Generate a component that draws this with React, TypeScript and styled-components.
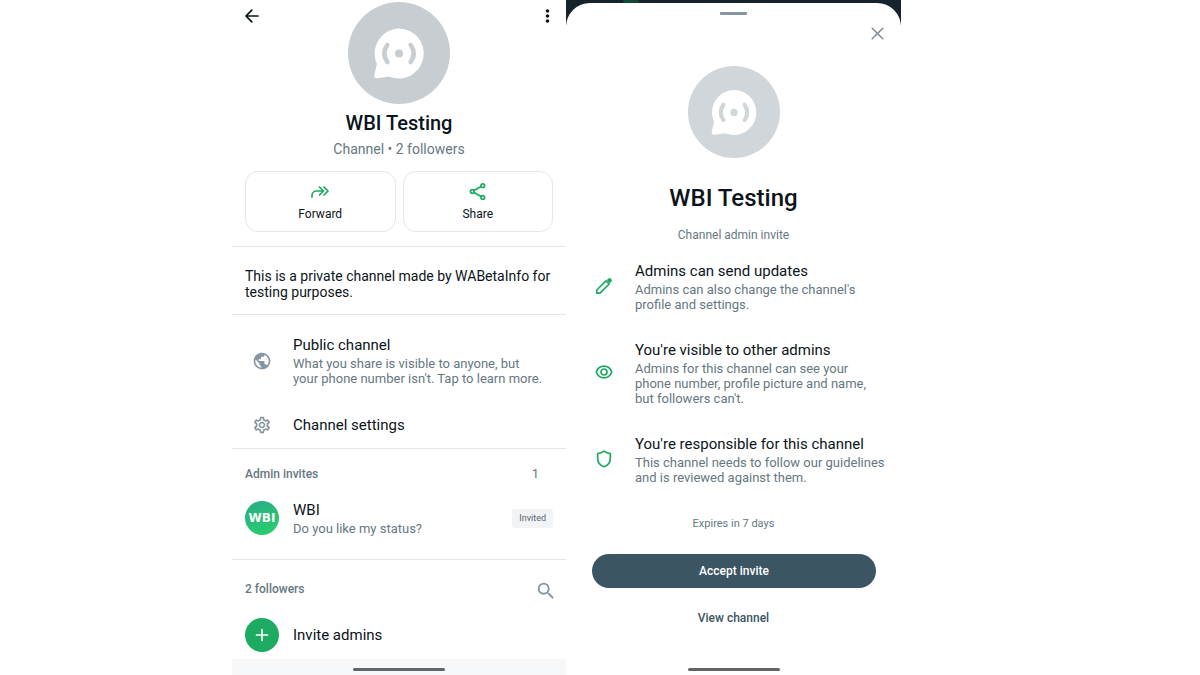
import React from "react";
import styled, { createGlobalStyle } from "styled-components";
import { MdPublic, MdOutlineSettings, MdSearch } from "react-icons/md";

const color = {
  text: "#0b141a",
  muted: "#667781",
  icon: "#8696a0",
  green: "#1daa61",
  line: "#e4e6e8",
  teal: "#3b5563",
};

const GlobalStyle = createGlobalStyle`
  * { box-sizing: border-box; }
  body {
    margin: 0;
    background: #fff;
    color: ${color.text};
    font-family: Roboto, "Liberation Sans", sans-serif;
  }
  h1, h2, h3, p, ul { margin: 0; padding: 0; font-weight: 400; }
  ul { list-style: none; }
  svg { display: block; }
`;

const Stage = styled.main`
  display: grid;
  grid-template-columns: 232fr 334fr 335fr 299fr;
  min-height: 100vh;
`;

const Phone = styled.section`
  grid-column: 2;
  display: flex;
  flex-direction: column;
`;

const Button = styled.button`
  border: 0;
  padding: 0;
  background: none;
  color: inherit;
  font: inherit;
  cursor: pointer;
`;

const Header = styled.header`
  display: grid;
  grid-template-columns: 16px 1fr 16px;
  align-items: start;
  justify-items: center;
  padding: 2px 12px 0;
`;

const IconButton = styled(Button)`
  display: grid;
  place-items: center;
  width: 16px;
  height: 28px;
  color: ${color.text};
`;

const SearchButton = styled(Button)`
  align-self: flex-end;
  margin: 0 -4px -3px 0;
  color: ${color.icon};
`;

const Avatar = styled.div<{ $size: number; $tone: string }>`
  width: ${(p) => p.$size}px;
  height: ${(p) => p.$size}px;
  border-radius: 50%;
  background: ${(p) => p.$tone};
  color: ${(p) => p.$tone};
`;

const Title = styled.h1<{ $large?: boolean }>`
  font-size: ${(p) => (p.$large ? 24 : 20)}px;
  line-height: ${(p) => (p.$large ? 28 : 24)}px;
  font-weight: 500;
  text-align: center;
`;

const ChannelInfo = styled.div`
  padding: 7px 13px 14px;
  border-bottom: 1px solid ${color.line};
`;

const Followers = styled.p`
  margin-top: 6px;
  color: ${color.muted};
  font-size: 14px;
  line-height: 16px;
  text-align: center;
`;

const Actions = styled.div`
  display: grid;
  grid-template-columns: 1fr 1fr;
  gap: 7px;
  margin-top: 14px;
`;

const Action = styled(Button)`
  display: flex;
  flex-direction: column;
  align-items: center;
  gap: 6px;
  height: 61px;
  padding-top: 10px;
  border: 1px solid ${color.line};
  border-radius: 13px;
  font-size: 12px;
  line-height: 16px;
`;

const Description = styled.p`
  padding: 21px 13px 14px;
  border-bottom: 1px solid ${color.line};
  font-size: 14px;
  line-height: 16px;
`;

const Group = styled.div<{ $top: number; $bottom: number; $last?: boolean }>`
  padding: ${(p) => p.$top}px 13px ${(p) => p.$bottom}px;
  border-bottom: ${(p) => (p.$last ? 0 : 1)}px solid ${color.line};
`;

const Row = styled(Button)`
  display: flex;
  align-items: center;
  gap: 14px;
  width: 100%;
  text-align: left;

  & + & { margin-top: 29px; }
`;

const RowIcon = styled.span`
  display: grid;
  place-items: center;
  flex: 0 0 34px;
  color: ${color.icon};
`;

const RowText = styled.span`
  display: flex;
  flex-direction: column;
  flex: 1;
  gap: 1px;
`;

const ItemTitle = styled.span`
  font-size: 15px;
  line-height: 20px;
`;

const ItemBody = styled.span`
  color: ${color.muted};
  font-size: 13px;
  line-height: 15px;
`;

const GroupHead = styled.div<{ $right: number; $gap: number }>`
  display: flex;
  align-items: center;
  justify-content: space-between;
  height: 20px;
  padding-right: ${(p) => p.$right}px;
  margin-bottom: ${(p) => p.$gap}px;
  color: ${color.muted};
  font-size: 13px;
  line-height: 16px;
`;

const GroupTitle = styled.h2`
  font-size: 12px;
  font-weight: 500;
`;

const RoundBadge = styled.span<{ $gradient?: boolean }>`
  display: grid;
  place-items: center;
  flex: 0 0 34px;
  height: 34px;
  border-radius: 50%;
  background: ${(p) =>
    p.$gradient ? "linear-gradient(160deg, #27ab86, #2bd06c)" : color.green};
  color: #fff;
  font-family: "DejaVu Sans", sans-serif;
  font-size: 12px;
  font-weight: 700;
`;

const Tag = styled.span`
  padding: 0 7px;
  border-radius: 3px;
  background: #f2f3f5;
  color: #54656f;
  font-size: 9px;
  line-height: 19px;
`;

const NavBar = styled.div<{ $tone: string }>`
  display: flex;
  justify-content: center;
  height: 16px;
  margin-top: auto;
  padding-top: 9px;
  background: ${(p) => p.$tone};

  &::after {
    content: "";
    width: 92px;
    height: 3px;
    border-radius: 2px;
    background: #636466;
  }
`;

const Backdrop = styled.section`
  grid-column: 3;
  display: flex;
  flex-direction: column;
  padding-top: 3px;
  background:
    radial-gradient(circle at 65px 0, #0d4a38 0 7px, transparent 9px),
    linear-gradient(#15232c, #15232c) top / 100% 25px no-repeat;
`;

const Sheet = styled.div`
  display: flex;
  flex-direction: column;
  flex: 1;
  border-radius: 24px 24px 0 0;
  background: #fff;
`;

const Grabber = styled.div`
  width: 27px;
  height: 3px;
  margin: 9px auto 0;
  border-radius: 1px;
  background: #8696a0;
`;

const CloseButton = styled(Button)`
  align-self: flex-end;
  margin: 11px 16px 0 0;
  padding: 1px;
  color: #7b8a94;
`;

const Hero = styled.div`
  display: flex;
  flex-direction: column;
  align-items: center;
  gap: 26px;
  padding: 25px 0 15px;
`;

const Caption = styled.p<{ $small?: boolean }>`
  color: ${color.muted};
  font-size: ${(p) => (p.$small ? 11 : 12)}px;
  line-height: 16px;
  text-align: center;
`;

const Points = styled.ul`
  display: flex;
  flex-direction: column;
  gap: 28px;
  padding: 18px 8px 31px 26px;
`;

const Point = styled.li`
  display: flex;
  align-items: center;
  gap: 19px;
`;

const PointIcon = styled.span`
  display: grid;
  place-items: center;
  flex: 0 0 24px;
  padding-bottom: 2px;
  color: ${color.green};
`;

const AcceptButton = styled(Button)`
  height: 34px;
  margin: 22px 25px 0 26px;
  border-radius: 17px;
  background: ${color.teal};
  color: #fff;
  font-size: 12px;
  font-weight: 500;
`;

const ViewLink = styled.a`
  align-self: center;
  margin-top: 22px;
  color: ${color.teal};
  font-size: 12px;
  line-height: 16px;
  font-weight: 500;
  text-decoration: none;
`;

const stroke = {
  fill: "none",
  stroke: "currentColor",
  strokeLinecap: "round" as const,
  strokeLinejoin: "round" as const,
};

const ChannelGlyph = () => (
  <svg viewBox="0 0 102 102" width="100%" height="100%" aria-hidden="true">
    <path
      fill="#fff"
      d="M51 26.500a25 25 0 1 1-10 48L29.500 76.300c-2 .4-3.600-1-3.200-3l2.600-11.500A25 25 0 0 1 51 26.500z"
    />
    <circle cx="51" cy="51.500" r="4" fill="currentColor" />
    <g {...stroke} strokeWidth="4.600">
      <path d="M39.300 43q-6 8.500 0 17" />
      <path d="M62.700 43q6 8.500 0 17" />
    </g>
  </svg>
);

const BackIcon = () => (
  <svg width="16" height="16" viewBox="0 0 16 16" {...stroke} strokeWidth="1.700">
    <path d="M14 8H2.200M7.800 2.200L2 8l5.800 5.800" />
  </svg>
);

const MoreIcon = () => (
  <svg width="16" height="16" viewBox="0 0 16 16" fill="currentColor">
    <circle cx="9.500" cy="3" r="1.800" />
    <circle cx="9.500" cy="8" r="1.800" />
    <circle cx="9.500" cy="13" r="1.800" />
  </svg>
);

const ForwardIcon = () => (
  <svg width="18" height="18" viewBox="0 0 18 18" {...stroke} strokeWidth="1.700" color={color.green}>
    <path d="M1 15v-1.500C1 10.800 3 9 5.500 9H12M8.500 5l4 4-4 4M13 5l4 4-4 4" />
  </svg>
);

const ShareIcon = () => (
  <svg width="18" height="18" viewBox="0 0 18 18" {...stroke} strokeWidth="1.700" color={color.green}>
    <circle cx="3.300" cy="9.500" r="1.800" />
    <circle cx="13.800" cy="3.700" r="1.800" />
    <circle cx="13.800" cy="15.500" r="1.800" />
    <path d="M5 8.600l7.100-4M5 10.400l7.100 4.200" />
  </svg>
);

const PlusIcon = () => (
  <svg width="14" height="14" viewBox="0 0 14 14" {...stroke} strokeWidth="1.700">
    <path d="M7 1.500v11M1.500 7h11" />
  </svg>
);

const CloseIcon = () => (
  <svg width="13" height="13" viewBox="0 0 13 13" {...stroke} strokeWidth="1.500">
    <path d="M1.200 1.200l10.600 10.600M11.800 1.200L1.200 11.800" />
  </svg>
);

const PencilIcon = () => (
  <svg width="18" height="18" viewBox="0 0 18 18" {...stroke} strokeWidth="1.700">
    <path d="M1.800 16.200v-3.200l9.200-9.200 3.200 3.200-9.200 9.200z" />
    <path d="M12.900 3.200l1-1q.6-.5 1.200 0l.7.700q.5.600 0 1.200l-1 1z" fill="currentColor" />
  </svg>
);

const EyeIcon = () => (
  <svg width="18" height="18" viewBox="0 0 18 18" {...stroke} strokeWidth="1.700">
    <path d="M1.200 9C2.600 5.400 5.600 3.200 9 3.200s6.400 2.200 7.800 5.800c-1.400 3.600-4.400 5.800-7.800 5.800S2.600 12.600 1.200 9z" />
    <circle cx="9" cy="9" r="3" />
  </svg>
);

const ShieldIcon = () => (
  <svg width="18" height="18" viewBox="0 0 18 18" {...stroke} strokeWidth="1.700">
    <path d="M9 1.200C7.300 2.600 5 3.400 2.700 3.600v4.600C2.700 12.500 5 15.500 9 16.800c4-1.300 6.300-4.300 6.300-8.600V3.600C13 3.400 10.700 2.600 9 1.200z" />
  </svg>
);

const points = [
  {
    icon: <PencilIcon />,
    title: "Admins can send updates",
    lines: ["Admins can also change the channel's", "profile and settings."],
  },
  {
    icon: <EyeIcon />,
    title: "You're visible to other admins",
    lines: [
      "Admins for this channel can see your",
      "phone number, profile picture and name,",
      "but followers can't.",
    ],
  },
  {
    icon: <ShieldIcon />,
    title: "You're responsible for this channel",
    lines: ["This channel needs to follow our guidelines", "and is reviewed against them."],
  },
];

const Lines = ({ lines }: { lines: string[] }) => (
  <>
    {lines.map((line, i) => (
      <React.Fragment key={line}>
        {i > 0 && <br />}
        {line}
      </React.Fragment>
    ))}
  </>
);

export default function App() {
  return (
    <>
      <GlobalStyle />
      <Stage>
        <Phone>
          <Header>
            <IconButton aria-label="Back"><BackIcon /></IconButton>
            <Avatar $size={102} $tone="#c8cdd1"><ChannelGlyph /></Avatar>
            <IconButton aria-label="More options"><MoreIcon /></IconButton>
          </Header>
          <ChannelInfo>
            <Title>WBI Testing</Title>
            <Followers>Channel • 2 followers</Followers>
            <Actions>
              <Action><ForwardIcon />Forward</Action>
              <Action><ShareIcon />Share</Action>
            </Actions>
          </ChannelInfo>
          <Description>
            <Lines lines={["This is a private channel made by WABetaInfo for", "testing purposes."]} />
          </Description>
          <Group $top={20} $bottom={13}>
            <Row>
              <RowIcon><MdPublic size={20} /></RowIcon>
              <RowText>
                <ItemTitle>Public channel</ItemTitle>
                <ItemBody>
                  <Lines lines={["What you share is visible to anyone, but", "your phone number isn't. Tap to learn more."]} />
                </ItemBody>
              </RowText>
            </Row>
            <Row>
              <RowIcon><MdOutlineSettings size={20} /></RowIcon>
              <ItemTitle>Channel settings</ItemTitle>
            </Row>
          </Group>
          <Group $top={15} $bottom={23}>
            <GroupHead $right={14} $gap={16}>
              <GroupTitle>Admin invites</GroupTitle>
              <span>1</span>
            </GroupHead>
            <Row>
              <RoundBadge $gradient>WBI</RoundBadge>
              <RowText>
                <ItemTitle>WBI</ItemTitle>
                <ItemBody>Do you like my status?</ItemBody>
              </RowText>
              <Tag>Invited</Tag>
            </Row>
          </Group>
          <Group $top={19} $bottom={7} $last>
            <GroupHead $right={0} $gap={19}>
              <GroupTitle>2 followers</GroupTitle>
              <SearchButton aria-label="Search followers">
                <MdSearch size={22} />
              </SearchButton>
            </GroupHead>
            <Row>
              <RoundBadge><PlusIcon /></RoundBadge>
              <ItemTitle>Invite admins</ItemTitle>
            </Row>
          </Group>
          <NavBar $tone="#f7f8fa" />
        </Phone>

        <Backdrop>
          <Sheet>
            <Grabber />
            <CloseButton aria-label="Close"><CloseIcon /></CloseButton>
            <Hero>
              <Avatar $size={92} $tone="#d1d6da"><ChannelGlyph /></Avatar>
              <Title as="h2" $large>WBI Testing</Title>
            </Hero>
            <Caption>Channel admin invite</Caption>
            <Points>
              {points.map((p) => (
                <Point key={p.title}>
                  <PointIcon>{p.icon}</PointIcon>
                  <RowText>
                    <ItemTitle>{p.title}</ItemTitle>
                    <ItemBody><Lines lines={p.lines} /></ItemBody>
                  </RowText>
                </Point>
              ))}
            </Points>
            <Caption $small>Expires in 7 days</Caption>
            <AcceptButton>Accept invite</AcceptButton>
            <ViewLink href="#channel">View channel</ViewLink>
            <NavBar $tone="#fff" />
          </Sheet>
        </Backdrop>
      </Stage>
    </>
  );
}
